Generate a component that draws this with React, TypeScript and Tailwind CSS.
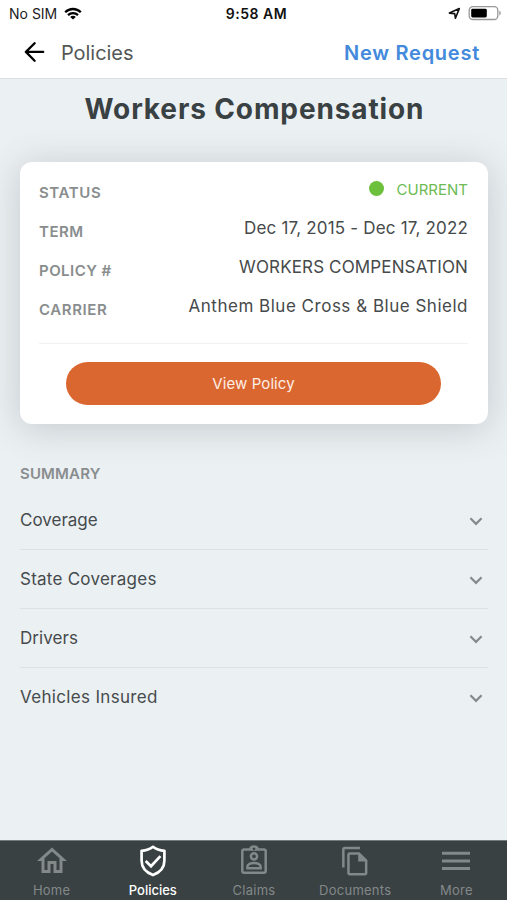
import type { ReactNode } from 'react';

function StatusBar() {
  return (
    <div className="grid h-7 grid-cols-3 items-center pl-[9px] pr-[6px] text-black">
      <div className="flex items-center gap-[7px]">
        <span className="text-[14px] leading-7 text-[#222]">No SIM</span>
        <svg width="18" height="13" viewBox="0 0 18 13" fill="none" stroke="#000" strokeWidth="2.3" className="-mt-[2px]">
          <path d="M1.2 5.2C5.6 0.9 12.4 0.9 16.8 5.2" />
          <path d="M4 8.1C6.8 5.4 11.2 5.4 14 8.1" />
          <path d="M9 12.6 6.2 9.9C7.8 8.5 10.2 8.5 11.8 9.9Z" fill="#000" stroke="none" />
        </svg>
      </div>
      <span className="pl-[3px] text-center text-[14px] font-semibold leading-7 tracking-[0.5px] text-[#111]">9:58 AM</span>
      <div className="flex items-center justify-end gap-[7px]">
        <svg width="13" height="13" viewBox="0 0 13 13" fill="none" stroke="#111" strokeWidth="1.6" strokeLinejoin="round" className="-mt-px">
          <path d="M1.4 6.1 11.3 1.6 7.4 11.2 6.7 6.6Z" />
        </svg>
        <svg width="33" height="16" viewBox="0 0 33 16" className="-mt-[2px]">
          <rect x="1.2" y="1.7" width="28.6" height="12.8" rx="3.6" fill="#fff" stroke="#999" strokeWidth="1.3" />
          <rect x="3.2" y="3.7" width="15.6" height="8.8" rx="1.4" fill="#000" />
          <path d="M31.3 5.7C32.5 6.2 32.8 7.2 32.8 8.1S32.5 10 31.3 10.5Z" fill="#999" />
        </svg>
      </div>
    </div>
  );
}

function Header() {
  return (
    <header className="flex h-[51px] items-center border-b border-[#dcdfe0] pl-6 pr-[27px]">
      <svg width="21" height="20" viewBox="0 0 21 20" fill="none" stroke="#000" strokeWidth="2.3" strokeLinecap="round" strokeLinejoin="round" className="-mt-[2px]">
        <path d="M10.6 1.2 1.9 9.9 10.6 18.7M2.2 9.9H19.2" />
      </svg>
      <span className="ml-[16px] text-[20px] leading-[50px] tracking-[-0.05px] text-[#545757]">Policies</span>
      <span className="ml-auto text-[20px] font-semibold leading-[50px] tracking-[0.75px] text-[#4389dc]">New Request</span>
    </header>
  );
}

function Row({ label, labelClass, children }: { label: string; labelClass: string; children: ReactNode }) {
  return (
    <div className="flex h-[39px] justify-between">
      <span className={`text-[15px] font-semibold leading-[39px] text-[#898d8e] ${labelClass}`}>{label}</span>
      {children}
    </div>
  );
}

function PolicyCard() {
  const value = 'text-[17px] leading-[32px] text-[#464a4b]';
  return (
    <section className="ml-5 mr-[19px] h-[262px] rounded-[12px] bg-white pl-[19px] pr-5 pt-[11px] shadow-[0_4px_36px_rgba(70,80,85,0.24)]">
      <Row label="STATUS" labelClass="tracking-[0.6px]">
        <span className="flex h-[34px] items-center text-[15px] leading-[34px] text-[#6dbb52]">
          <i className="mb-[3px] mr-[13px] size-[15px] rounded-full bg-[#6cc03c]" />
          CURRENT
        </span>
      </Row>
      <Row label="TERM" labelClass="tracking-[0.5px]">
        <span className={`${value} tracking-[0.18px]`}>Dec 17, 2015 - Dec 17, 2022</span>
      </Row>
      <Row label="POLICY #" labelClass="tracking-[0.45px]">
        <span className={`${value} tracking-[0.14px]`}>WORKERS COMPENSATION</span>
      </Row>
      <Row label="CARRIER" labelClass="tracking-[0.6px]">
        <span className={`${value} tracking-[0.51px]`}>Anthem Blue Cross &amp; Blue Shield</span>
      </Row>
      <div className="mt-[14px] border-t border-[#f0f1f2]" />
      <button className="mx-auto mt-[18px] block h-[43px] w-[375px] rounded-full bg-[#db6730] text-center text-[15px] leading-[41px] tracking-[0.1px] text-[#fdeee6]">
        View Policy
      </button>
    </section>
  );
}

const sections = [
  { title: 'Coverage', tracking: 'tracking-[0px]' },
  { title: 'State Coverages', tracking: 'tracking-[0.25px]' },
  { title: 'Drivers', tracking: 'tracking-[0.05px]' },
  { title: 'Vehicles Insured', tracking: 'tracking-[0.33px]' },
];

function Summary() {
  return (
    <section className="ml-5 mr-[19px] mt-[38px]">
      <h2 className="text-[15px] font-semibold leading-6 tracking-[0.15px] text-[#898d8e]">SUMMARY</h2>
      <ul className="mt-[5px]">
        {sections.map((s) => (
          <li key={s.title} className="flex h-[59px] items-center justify-between border-b border-[#dde1e3] pr-[5px] last:border-transparent">
            <span className={`text-[17px] leading-[58px] text-[#464b4d] ${s.tracking}`}>{s.title}</span>
            <svg className="mt-[2px]" width="14" height="9" viewBox="0 0 14 9" fill="none" stroke="#858b8d" strokeWidth="2.2">
              <path d="M1.4 1.3 7 6.9 12.6 1.3" />
            </svg>
          </li>
        ))}
      </ul>
    </section>
  );
}

function Tab({ label, active, labelClass, children }: { label: string; active?: boolean; labelClass: string; children: ReactNode }) {
  return (
    <div className={`flex flex-1 flex-col items-center ${active ? 'text-white' : 'text-[#838889]'}`}>
      <div className="flex h-[40px] items-center justify-center">{children}</div>
      <span className={`text-[13px] leading-[18px] ${labelClass}`}>{label}</span>
    </div>
  );
}

function TabBar() {
  return (
    <nav className="mt-auto flex h-[60px] border-t border-[#737a7d] bg-[#394143] pl-px">
      <Tab label="Home" labelClass="tracking-[0.2px]">
        <svg width="36" height="36" viewBox="0 0 24 24" fill="currentColor">
          <path d="M12 5.69l5 4.5V18h-2v-6H9v6H7v-7.81l5-4.5M12 3L2 12h3v8h6v-6h2v6h6v-8h3L12 3z" />
        </svg>
      </Tab>
      <Tab label="Policies" active labelClass="font-medium">
        <svg width="28" height="32" viewBox="0 0 28 32" fill="none" stroke="currentColor" strokeWidth="2.7">
          <path d="M14 1.8C10.8 4.4 6.8 5.6 2.6 5.8V15.8C2.6 22.8 7.4 27.6 14 30.1C20.6 27.6 25.4 22.8 25.4 15.8V5.8C21.2 5.6 17.2 4.4 14 1.8Z" strokeLinejoin="round" />
          <path d="M6.7 16 12 21.2 21.4 11.2" />
        </svg>
      </Tab>
      <Tab label="Claims" labelClass="tracking-[0.25px]">
        <svg width="26" height="30" viewBox="0 0 26 30" fill="none" stroke="currentColor" strokeWidth="2.5" className="-mt-[2px]">
          <rect x="1.3" y="4.4" width="23.4" height="23.4" rx="1.8" />
          <path d="M9.3 4.2C9.7 0.6 16.3 0.6 16.7 4.2" />
          <circle cx="13" cy="3.9" r="1.2" fill="#394143" stroke="none" />
          <circle cx="13" cy="11.3" r="3.1" />
          <path d="M6.4 23.2V21.8C6.4 16.8 19.6 16.8 19.6 21.8V23.2Z" />
        </svg>
      </Tab>
      <Tab label="Documents" labelClass="tracking-[0.25px]">
        <svg width="26" height="30" viewBox="0 0 27 31" fill="none" stroke="currentColor" strokeWidth="2.6">
          <path d="M1.4 22.3V3.4Q1.4 1.9 2.9 1.9H18.6" />
          <path d="M8.2 7.6H17.6L25.1 15.1V27.7Q25.1 29.2 23.6 29.2H8.2Q6.7 29.2 6.7 27.7V9.1Q6.7 7.6 8.2 7.6Z" />
          <path d="M16.8 7.5V16H25.2Z" fill="currentColor" stroke="none" />
        </svg>
      </Tab>
      <Tab label="More" labelClass="tracking-[0.2px]">
        <svg width="28" height="20" viewBox="0 0 28 20" fill="none" stroke="currentColor" strokeWidth="3">
          <path d="M0 2.2H28M0 9.9H28M0 17.6H28" />
        </svg>
      </Tab>
    </nav>
  );
}

export default function App() {
  return (
    <div className="flex h-screen w-full flex-col overflow-hidden bg-[#ebf0f3] font-['Inter','Liberation_Sans',sans-serif]">
      <div className="bg-white">
        <StatusBar />
        <Header />
      </div>
      <h1 className="mb-[22px] pl-[2px] text-center text-[28px] font-bold leading-[61px] tracking-[0.88px] text-[#394143]">Workers Compensation</h1>
      <PolicyCard />
      <Summary />
      <TabBar />
    </div>
  );
}
